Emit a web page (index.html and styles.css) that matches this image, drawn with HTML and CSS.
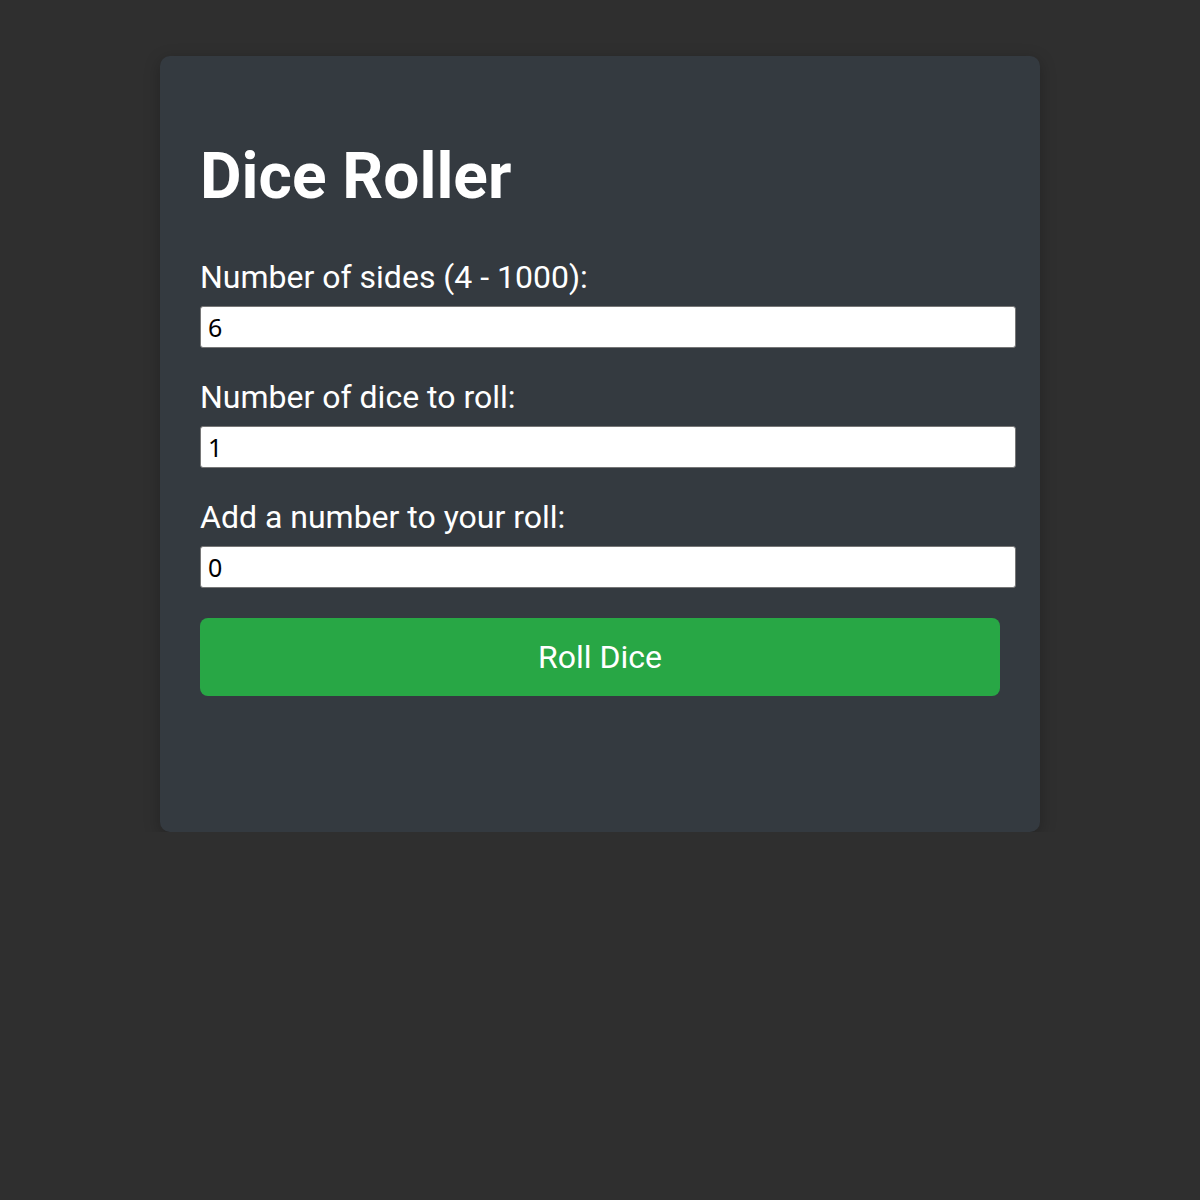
FILE: index.html
```html
<!DOCTYPE html>
<html lang="en">
<head>
<meta charset="utf-8">
<title>Dice Roller</title>
<link rel="stylesheet" href="styles.css">
</head>
<body>
<main class="card">
  <h1 class="title">Dice Roller</h1>
  <form class="form">
    <div class="field">
      <label class="label" for="sides">Number of sides (4 - 1000):</label>
      <input class="input" id="sides" type="text" value="6">
    </div>
    <div class="field">
      <label class="label" for="count">Number of dice to roll:</label>
      <input class="input" id="count" type="text" value="1">
    </div>
    <div class="field">
      <label class="label" for="mod">Add a number to your roll:</label>
      <input class="input" id="mod" type="text" value="0">
    </div>
    <button class="button" type="button">Roll Dice</button>
  </form>
</main>
</body>
</html>
```

FILE: styles.css
```css
html, body {
  margin: 0;
  padding: 0;
  background: #2f2f2f;
}
body {
  padding-top: 56px;
  font-family: Roboto, "Liberation Sans", sans-serif;
  color: #ffffff;
}
.card {
  width: 800px;
  margin: 0 auto;
  background: #343a40;
  border-radius: 10px;
  padding: 40px 40px 136px;
  box-shadow: 0 4px 16px rgba(0, 0, 0, 0.25);
}
.title {
  font-size: 64px;
  font-weight: 700;
  margin: 43px 0 44px;
  line-height: normal;
}
.field {
  margin-bottom: 30px;
}
.label {
  display: block;
  font-size: 32px;
  line-height: normal;
  margin-bottom: 10px;
}
.input {
  display: block;
  width: 100%;
  box-sizing: content-box;
  margin: 0;
  padding: 6px 7px;
  height: 28px;
  font-family: "Noto Sans", "Open Sans", sans-serif;
  font-size: 25px;
  color: #000;
  background: #fff;
  border: 1px solid #767676;
  border-radius: 3px;
}
.button {
  display: block;
  width: 100%;
  height: 78px;
  margin: 0;
  border: none;
  border-radius: 8px;
  background: #28a745;
  color: #fff;
  font-family: Roboto, "Liberation Sans", sans-serif;
  font-size: 32px;
  cursor: pointer;
}
```
